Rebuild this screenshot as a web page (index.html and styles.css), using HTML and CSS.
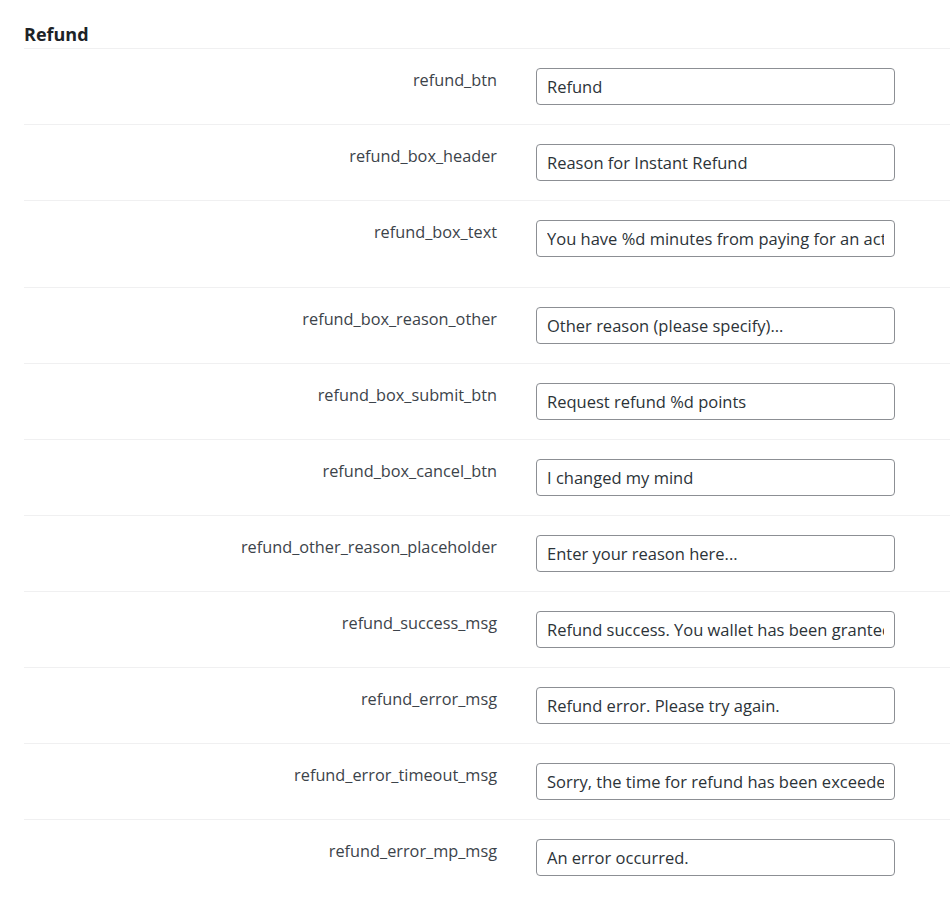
FILE: index.html
```html
<!DOCTYPE html>
<html lang="en">
<head>
  <meta charset="UTF-8">
  <meta name="viewport" content="width=device-width, initial-scale=1">
  <title>Refund settings</title>
  <link rel="stylesheet" href="styles.css">
</head>
<body>
  <div class="wrap">
    <h2>Refund</h2>

    <div class="form-table">
      <div class="row">
        <label for="refund_btn">refund_btn</label>
        <input type="text" id="refund_btn" value="Refund">
      </div>
      <div class="row">
        <label for="refund_box_header">refund_box_header</label>
        <input type="text" id="refund_box_header" value="Reason for Instant Refund">
      </div>
      <div class="row tall">
        <label for="refund_box_text">refund_box_text</label>
        <input type="text" id="refund_box_text" value="You have %d minutes from paying for an action to request a refund.">
      </div>
      <div class="row">
        <label for="refund_box_reason_other">refund_box_reason_other</label>
        <input type="text" id="refund_box_reason_other" value="Other reason (please specify)...">
      </div>
      <div class="row">
        <label for="refund_box_submit_btn">refund_box_submit_btn</label>
        <input type="text" id="refund_box_submit_btn" value="Request refund %d points">
      </div>
      <div class="row">
        <label for="refund_box_cancel_btn">refund_box_cancel_btn</label>
        <input type="text" id="refund_box_cancel_btn" value="I changed my mind">
      </div>
      <div class="row">
        <label for="refund_other_reason_placeholder">refund_other_reason_placeholder</label>
        <input type="text" id="refund_other_reason_placeholder" value="Enter your reason here...">
      </div>
      <div class="row">
        <label for="refund_success_msg">refund_success_msg</label>
        <input type="text" id="refund_success_msg" value="Refund success. You wallet has been granted %d points.">
      </div>
      <div class="row">
        <label for="refund_error_msg">refund_error_msg</label>
        <input type="text" id="refund_error_msg" value="Refund error. Please try again.">
      </div>
      <div class="row">
        <label for="refund_error_timeout_msg">refund_error_timeout_msg</label>
        <input type="text" id="refund_error_timeout_msg" value="Sorry, the time for refund has been exceeded.">
      </div>
      <div class="row">
        <label for="refund_error_mp_msg">refund_error_mp_msg</label>
        <input type="text" id="refund_error_mp_msg" value="An error occurred.">
      </div>
    </div>
  </div>
</body>
</html>
```

FILE: styles.css
```css
body {
  margin: 0;
  padding: 0;
  background: #fff;
  font-family: 'Open Sans', sans-serif;
  color: #3c434a;
}

.wrap {
  padding-left: 24px;
}

h2 {
  margin: 0;
  padding-top: 21px;
  height: 27px;
  font-size: 18px;
  line-height: 26px;
  font-weight: 700;
  color: #1d2327;
}

.row {
  display: flex;
  align-items: flex-start;
  border-top: 1px solid #f0f0f1;
  padding: 19px 0 19px 0;
  height: 37px;
}

.row.tall {
  height: 48px;
}

.row label {
  width: 473px;
  flex-shrink: 0;
  text-align: right;
  font-size: 16.3px;
  line-height: 22px;
  padding-top: 1px;
  color: #3c434a;
}

.row input {
  margin-left: 39px;
  width: 359px;
  height: 37px;
  box-sizing: border-box;
  padding: 0 10px;
  border: 1px solid #8c8f94;
  border-radius: 4px;
  font-family: 'Open Sans', sans-serif;
  font-size: 16.5px;
  color: #2c3338;
  background: #fff;
}
```
